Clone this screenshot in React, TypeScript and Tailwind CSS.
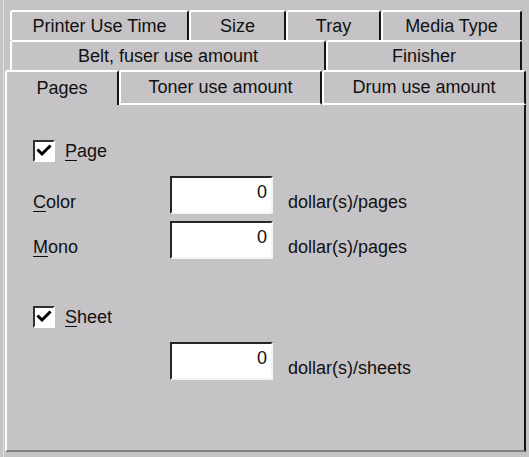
import type { ReactNode } from 'react';

const FONT = { fontFamily: '"Liberation Sans", Arial, sans-serif' };

function Tab({
  label,
  width,
  height = 'h-[30px]',
  bottom = false,
}: {
  label: string;
  width: string;
  height?: string;
  bottom?: boolean;
}) {
  return (
    <div
      className={`${width} ${height} shrink-0 flex items-center justify-center rounded-t-[3px] border-t-2 border-l-2 border-r-2 border-t-white border-l-white border-r-[#141414] ${
        bottom ? 'border-b-2 border-b-white' : ''
      }`}
    >
      <span className="leading-[21px]">{label}</span>
    </div>
  );
}

function Checkbox({ label }: { label: ReactNode }) {
  return (
    <div className="flex items-center h-[22px]">
      <div className="w-[22px] h-[22px] border-2 border-t-[#303030] border-l-[#303030] border-b-white border-r-white bg-white flex items-center justify-center">
        <svg width="16" height="16" viewBox="0 0 16 16">
          <polyline
            points="2.5,7.5 6,11 13.5,3.5"
            fill="none"
            stroke="#000"
            strokeWidth="3"
            strokeLinecap="square"
          />
        </svg>
      </div>
      <span className="ml-[10px] leading-[21px]">{label}</span>
    </div>
  );
}

function NumberField({ unit }: { unit: string }) {
  return (
    <div className="flex items-end">
      <div className="w-[103px] h-[38px] border-2 border-t-[#262626] border-l-[#262626] border-b-[#f4f4f4] border-r-[#f4f4f4] bg-white flex justify-end pt-[4px] pr-[4px]">
        <span className="leading-[21px]">0</span>
      </div>
      <span className="ml-[15px] mb-[1px] leading-[21px]">{unit}</span>
    </div>
  );
}

function U({ c, rest }: { c: string; rest: string }) {
  return (
    <>
      <span className="underline underline-offset-[3px]">{c}</span>
      {rest}
    </>
  );
}

export default function App() {
  return (
    <div
      className="w-[529px] h-[457px] bg-[#c6c3c6] pl-[3px] text-[18px] text-[#111] overflow-hidden"
      style={FONT}
    >
      <div className="h-full border-l border-[#e2e0e2] pl-[1px] pt-[10px]">
        {/* tab row 1 */}
        <div className="flex ml-[5px]">
          <Tab label="Printer Use Time" width="w-[179px]" />
          <Tab label="Size" width="w-[97px]" />
          <Tab label="Tray" width="w-[95px]" />
          <Tab label="Media Type" width="w-[141px]" />
        </div>
        {/* tab row 2 */}
        <div className="flex ml-[5px]">
          <Tab label="Belt, fuser use amount" width="w-[316px]" />
          <Tab label="Finisher" width="w-[196px]" />
        </div>
        {/* tab row 3, selected row */}
        <div className="flex">
          <Tab label="Pages" width="w-[114px]" height="h-[35px]" />
          <Tab label="Toner use amount" width="w-[203px]" height="h-[35px]" bottom />
          <Tab label="Drum use amount" width="w-[204px]" height="h-[35px]" bottom />
        </div>

        {/* panel */}
        <div className="w-[521px] h-[347px] border-l-2 border-r-2 border-b-2 border-l-white border-r-[#141414] border-b-[#848284] pl-[26px] pt-[35px]">
          <Checkbox label={<U c="P" rest="age" />} />

          <div className="flex items-end mt-[14px]">
            <span className="w-[137px] mb-[1px] leading-[21px]">
              <U c="C" rest="olor" />
            </span>
            <NumberField unit="dollar(s)/pages" />
          </div>
          <div className="flex items-end mt-[7px]">
            <span className="w-[137px] mb-[1px] leading-[21px]">
              <U c="M" rest="ono" />
            </span>
            <NumberField unit="dollar(s)/pages" />
          </div>

          <div className="mt-[47px]">
            <Checkbox label={<U c="S" rest="heet" />} />
          </div>

          <div className="flex mt-[14px] pl-[137px]">
            <NumberField unit="dollar(s)/sheets" />
          </div>
        </div>
      </div>
    </div>
  );
}
